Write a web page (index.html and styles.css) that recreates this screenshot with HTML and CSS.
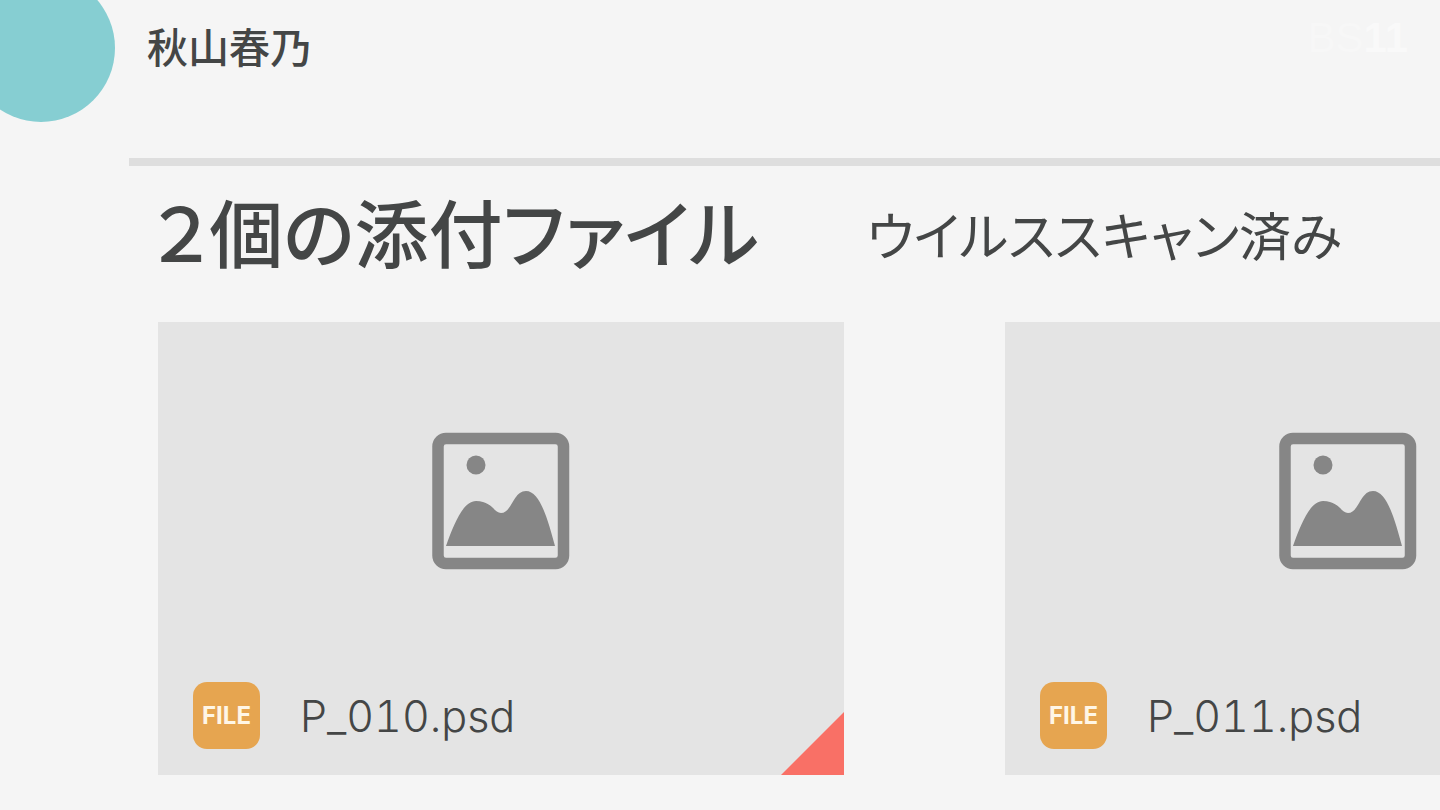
FILE: index.html
```html
<!DOCTYPE html>
<html lang="ja">
<head>
<meta charset="utf-8">
<meta name="viewport" content="width=device-width, initial-scale=1">
<title>秋山春乃</title>
<link rel="stylesheet" href="styles.css">
</head>
<body>
<svg class="symbols" aria-hidden="true">
  <symbol id="picture" viewBox="0 0 138 138">
    <rect x="6" y="6.500" width="125.500" height="125" rx="8" fill="none" stroke="currentColor" stroke-width="11.500"/>
    <circle cx="44" cy="33" r="9.500" fill="currentColor"/>
    <path fill="currentColor" d="M14 114C22 92 31 69 44 69C60 69 62 81 69 81C80 81 81 59 94 59C108 59 116 88 123 114Z"/>
  </symbol>
</svg>
<header class="sender">
  <div class="avatar"></div>
  <p class="name">秋山春乃</p>
  <span class="station">BS<b>11</b></span>
</header>
<main class="attachments">
  <div class="heading">
    <h1 class="title">&#xFF12;個の添付ファイル</h1>
    <p class="scan">ウイルススキャン済み</p>
  </div>
  <ul class="files">
    <li class="card card-marked">
      <div class="preview"><svg class="picture" aria-hidden="true"><use href="#picture"/></svg></div>
      <div class="caption"><span class="badge">FILE</span><span class="filename">P_010.psd</span></div>
    </li>
    <li class="card">
      <div class="preview"><svg class="picture" aria-hidden="true"><use href="#picture"/></svg></div>
      <div class="caption"><span class="badge">FILE</span><span class="filename">P_011.psd</span></div>
    </li>
  </ul>
</main>
</body>
</html>
```
FILE: styles.css
```css
* { box-sizing: border-box; }
body {
  margin: 0;
  min-height: 100vh;
  overflow: hidden;
  background: #f5f5f5;
  color: #444646;
  font-family: "Noto Sans CJK JP", sans-serif;
}
h1, p, ul { margin: 0; padding: 0; }
.symbols { display: none; }
.sender {
  display: flex;
  align-items: flex-start;
  height: 158px;
  padding-right: 32px;
}
.avatar {
  flex: none;
  width: 148px;
  height: 148px;
  margin: -26px 32px 0 -33px;
  border-radius: 50%;
  background: #86ced2;
}
.name {
  padding-top: 15px;
  font-size: 41px;
  font-weight: 500;
  line-height: 60px;
}
.station {
  margin-left: auto;
  padding-top: 12px;
  color: #f7f7f7;
  font-family: "Liberation Sans", sans-serif;
  font-size: 42px;
  line-height: 52px;
}
.station b { color: #f9f9f9; }
.attachments {
  margin-left: 129px;
  border-top: 8px solid #dedede;
}
.heading {
  display: flex;
  align-items: center;
  gap: 108px;
  height: 156px;
  padding: 0 0 28px 24px;
  white-space: nowrap;
  font-feature-settings: "palt";
}
.title { font-size: 74px; font-weight: 500; line-height: 96px; }
.scan { padding-top: 8px; font-size: 52px; font-weight: 400; line-height: 72px; }
.files {
  display: flex;
  gap: 161px;
  padding-left: 29px;
  list-style: none;
}
.card {
  position: relative;
  display: flex;
  flex: none;
  flex-direction: column;
  width: 686px;
  height: 453px;
  padding: 0 35px 26px;
  background: #e4e4e4;
}
.card-marked::after {
  content: "";
  position: absolute;
  right: 0;
  bottom: 0;
  width: 63px;
  height: 63px;
  background: #f97066;
  clip-path: polygon(100% 0, 100% 100%, 0 100%);
}
.preview {
  flex: 1;
  display: flex;
  justify-content: center;
  padding-top: 110px;
}
.picture { width: 138px; height: 138px; color: #868686; }
.caption { display: flex; align-items: center; gap: 40px; }
.badge {
  width: 67px;
  border-radius: 14px;
  background: #e6a550;
  color: #fff6e6;
  font-family: Inter, sans-serif;
  font-size: 24px;
  font-weight: 700;
  line-height: 67px;
  text-align: center;
}
.filename {
  font-family: Inter, sans-serif;
  font-size: 43px;
  font-weight: 300;
  line-height: 64px;
  font-variant-numeric: tabular-nums;
}
```
